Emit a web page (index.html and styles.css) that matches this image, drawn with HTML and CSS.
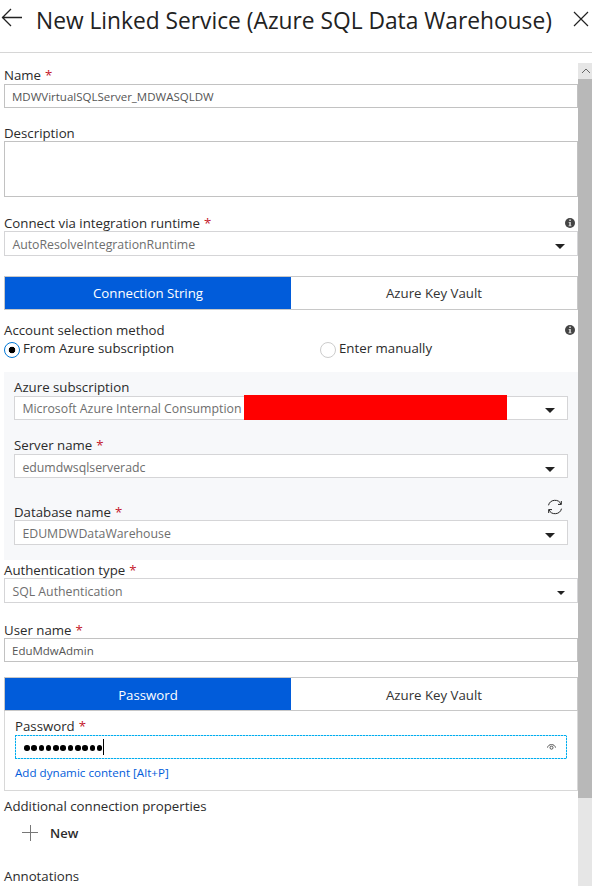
FILE: index.html
```html
<!DOCTYPE html>
<html lang="en">
<head>
<meta charset="utf-8">
<title>New Linked Service</title>
<link rel="stylesheet" href="styles.css">
</head>
<body>
<header class="header">
  <svg class="back" width="22" height="20" viewBox="0 0 22 20"><path d="M1 9.5H21M10 1L1.5 9.5L10 18"/></svg>
  <h1 class="title">New Linked Service (Azure SQL Data Warehouse)</h1>
  <svg class="close" width="16" height="16" viewBox="0 0 16 16"><path d="M1 1L15 15M15 1L1 15"/></svg>
</header>
<div class="body">
  <main class="form">
    <div class="field name">
      <div class="label">Name <b class="req">*</b></div>
      <div class="input">MDWVirtualSQLServer_MDWASQLDW</div>
    </div>
    <div class="field description">
      <div class="label low">Description</div>
      <div class="input area"></div>
    </div>
    <div class="field runtime">
      <div class="label low">Connect via integration runtime <b class="req">*</b>
        <svg class="info" width="10" height="10" viewBox="0 0 10 10"><circle cx="5" cy="5" r="5"/><path d="M4.2 1.6h1.7v1.3H4.2zM3.7 4h2.2v3.3h.5v.9H3.6v-.9h.6V4.9h-.5z"/></svg>
      </div>
      <div class="select low">AutoResolveIntegrationRuntime<i class="caret"></i></div>
    </div>
    <div class="tabs">
      <div class="tab active">Connection String</div>
      <div class="tab">Azure Key Vault</div>
    </div>
    <div class="method">
      <div class="label">Account selection method
        <svg class="info" width="10" height="10" viewBox="0 0 10 10"><circle cx="5" cy="5" r="5"/><path d="M4.2 1.6h1.7v1.3H4.2zM3.7 4h2.2v3.3h.5v.9H3.6v-.9h.6V4.9h-.5z"/></svg>
      </div>
      <div class="radios">
        <div class="option"><span class="radio checked"></span>From Azure subscription</div>
        <div class="option"><span class="radio"></span>Enter manually</div>
      </div>
    </div>
    <section class="panel">
      <div class="field">
        <div class="label">Azure subscription</div>
        <div class="select">Microsoft Azure Internal Consumption<span class="redaction"></span><i class="caret"></i></div>
      </div>
      <div class="field server">
        <div class="label">Server name <b class="req">*</b></div>
        <div class="select low">edumdwsqlserveradc<i class="caret"></i></div>
      </div>
      <div class="field database">
        <div class="label low">Database name <b class="req">*</b>
          <svg class="refresh" width="16" height="16" viewBox="0 0 16 16"><path d="M1.500 6.300A6.700 6.700 0 0 1 14.100 5.300M14.300 2V5.400H11M14.500 9.700A6.700 6.700 0 0 1 1.900 10.700M1.700 14V10.600H5"/></svg>
        </div>
        <div class="select tall low">EDUMDWDataWarehouse<i class="caret"></i></div>
      </div>
    </section>
    <div class="field auth">
      <div class="label low">Authentication type <b class="req">*</b></div>
      <div class="select low">SQL Authentication<i class="caret small"></i></div>
    </div>
    <div class="field user">
      <div class="label low">User name <b class="req">*</b></div>
      <div class="input">EduMdwAdmin</div>
    </div>
    <div class="tabs secret">
      <div class="tab active">Password</div>
      <div class="tab">Azure Key Vault</div>
    </div>
    <section class="password">
      <div class="label">Password <b class="req">*</b></div>
      <div class="secret-input">
        <span class="dots"><i></i><i></i><i></i><i></i><i></i><i></i><i></i><i></i><i></i><i></i><i></i></span>
        <span class="cursor"></span>
        <svg class="eye" width="9" height="6" viewBox="0 0 9 6"><path d="M.5 3.600C1 1.500 2.500.6 4.500.6S8 1.500 8.500 3.600"/><circle cx="4.500" cy="3.700" r="1.500"/></svg>
      </div>
      <a class="dynamic">Add dynamic content [Alt+P]</a>
    </section>
    <div class="label extra">Additional connection properties</div>
    <div class="new">
      <svg width="16" height="16" viewBox="0 0 16 16"><path d="M0 7.500H16M8.500 0V16"/></svg>
      <span>New</span>
    </div>
    <div class="label annotations">Annotations</div>
  </main>
  <div class="scrollbar">
    <div class="up"><svg width="10" height="6" viewBox="0 0 10 6"><path d="M1 5L5 1L9 5"/></svg></div>
    <div class="thumb"></div>
  </div>
</div>
</body>
</html>
```
FILE: styles.css
```css
* { box-sizing: border-box; }
html, body { height: 886px; overflow: hidden; }
body {
  margin: 0;
  background: #fff;
  color: #2b2b2b;
  font: 13.25px "Open Sans", "Noto Sans", sans-serif;
}
svg { display: block; flex: none; fill: none; stroke: #222; }

.header {
  display: flex;
  height: 53px;
  border-bottom: 1px solid #d6d6d6;
}
.back { margin: 8px 0 0 1px; stroke-width: 1.3; }
.title {
  margin: 5px 0 0 13px;
  width: 537px;
  font-size: 22.75px;
  font-weight: 400;
  line-height: 32px;
  white-space: nowrap;
  color: #222;
}
.close { margin: 11px 0 0; stroke-width: 1.2; }

.body { display: flex; height: 833px; }
.form { width: 574px; margin-left: 4px; padding-top: 13px; }
.label {
  display: flex;
  height: 18px;
  line-height: 18px;
  white-space: nowrap;
}
.label.low { line-height: 20px; }
.req { margin-left: 4px; font-weight: 400; color: #c4172c; }
.info { margin: 5px 3px 0 auto; stroke: none; }
.method .info { margin-top: 4px; }
.info circle { fill: #444; }
.info path { fill: #ccc; }

.input, .select {
  display: flex;
  align-items: center;
  background: #fff;
  white-space: nowrap;
}
.input {
  height: 24px;
  padding-left: 7px;
  border: 1px solid #c2c2c2;
  color: #555;
  font-size: 11.5px;
}
.area { height: 56px; }
.select {
  height: 25px;
  padding: 0 12px 0 7.4px;
  border: 1px solid #d5d5d7;
  color: #6e6e6e;
  font-size: 12.3px;
}
.select.low { padding-top: 2px; }
.caret {
  margin: 5px 0 0 auto;
  border: 5px solid transparent;
  border-top-color: #222;
  border-bottom: 0;
}
.select.low .caret { margin-top: 3px; }
.server .select.low .caret { margin-top: 5px; }
.select.low .caret.small { margin-top: 2px; border-width: 4px 4px 0; }
.description { margin-top: 15px; }
.runtime { margin-top: 16px; }

.tabs {
  display: flex;
  height: 34px;
  margin-top: 20px;
  border: 1px solid #c8c8c8;
}
.tab { flex: 1; text-align: center; line-height: 32px; color: #333; }
.tab.active { background: #015cda; color: #fff; }
.secret .tab { line-height: 34px; }

.method { height: 62px; padding-top: 11px; }
.radios { display: flex; height: 20px; }
.option { display: flex; flex: none; width: 316px; line-height: 18px; }
.option + .option { width: 240px; }
.radio {
  width: 16px;
  height: 16px;
  margin: 3px 3px 0 0;
  border: 1px solid #ccc;
  border-radius: 50%;
}
.radio.checked {
  border-color: #0078d7;
  background: radial-gradient(circle, #000 3px, #fff 3.6px);
}

.panel { height: 188px; padding: 6px 10px 0; background: #f7f8fa; }
.panel .select { height: 24px; }
.panel .select.tall { height: 25px; }
.server { margin-top: 16px; }
.database { margin-top: 24px; }
.redaction { align-self: center; flex: none; width: 263px; height: 25px; margin: -1px 0 0 2.5px; background: #f00; }
.refresh { margin: -3px 5px 0 auto; stroke-width: 1; }

.auth .select { padding-right: 12px; }
.user { margin-top: 17px; }
.secret { margin-top: 15px; }

.password {
  height: 80px;
  padding: 6px 10px 0;
  border: 1px solid #d8d8d8;
  border-top: 0;
}
.secret-input {
  display: flex;
  align-items: center;
  height: 24px;
  padding: 1px 11px 1px 9px;
  background:
    repeating-linear-gradient(90deg, #00adef 0 2px, #a6e2f9 2px 3px) top / 100% 1px no-repeat,
    repeating-linear-gradient(90deg, #00adef 0 2px, #a6e2f9 2px 3px) bottom / 100% 1px no-repeat,
    repeating-linear-gradient(#00adef 0 2px, #a6e2f9 2px 3px) left / 1px 100% no-repeat,
    repeating-linear-gradient(#00adef 0 2px, #a6e2f9 2px 3px) right / 1px 100% no-repeat;
}
.dots { display: flex; gap: 1.7px; margin-top: 2px; }
.dots i { width: 5.6px; height: 5.6px; border-radius: 50%; background: #000; }
.cursor { width: 1px; height: 16px; margin-left: .5px; background: #000; }
.eye { margin-left: auto; stroke: #555; }
.dynamic { display: block; margin-top: 5px; line-height: 17px; font-size: 11.64px; color: #015cda; }

.extra { margin-top: 6px; }
.new {
  display: flex;
  align-items: center;
  gap: 12px;
  height: 18px;
  margin: 9px 0 0 18px;
  font-size: 13px;
  font-weight: 600;
}
.new svg { stroke: #777; }
.annotations { margin-top: 25px; }

.scrollbar { width: 14px; height: 823px; margin-top: 10px; background: #e6e6e6; }
.up { display: flex; justify-content: center; align-items: center; height: 16px; padding-left: 2px; }
.up svg { stroke: #666; }
.thumb { height: 719px; background: #b8b8b8; }
```
